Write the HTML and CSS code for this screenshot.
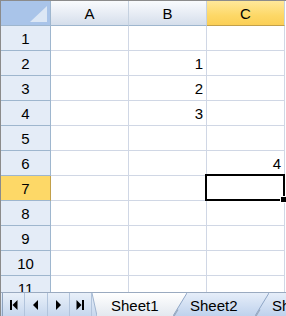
FILE: index.html
```html
<!DOCTYPE html>
<html>
<head>
<meta charset="utf-8">
<link rel="stylesheet" href="styles.css">
</head>
<body>
<div class="book">
  <div class="grid">
    <div class="corner"><span class="corner-tri"></span></div>
    <div class="colhead">A</div>
    <div class="colhead">B</div>
    <div class="colhead sel">C</div>

    <div class="rowhead">1</div><div class="cell"></div><div class="cell"></div><div class="cell"></div>
    <div class="rowhead">2</div><div class="cell"></div><div class="cell">1</div><div class="cell"></div>
    <div class="rowhead">3</div><div class="cell"></div><div class="cell">2</div><div class="cell"></div>
    <div class="rowhead">4</div><div class="cell"></div><div class="cell">3</div><div class="cell"></div>
    <div class="rowhead">5</div><div class="cell"></div><div class="cell"></div><div class="cell"></div>
    <div class="rowhead">6</div><div class="cell"></div><div class="cell"></div><div class="cell">4</div>
    <div class="rowhead sel">7</div><div class="cell"></div><div class="cell"></div><div class="cell active"><span class="handle"></span></div>
    <div class="rowhead">8</div><div class="cell"></div><div class="cell"></div><div class="cell"></div>
    <div class="rowhead">9</div><div class="cell"></div><div class="cell"></div><div class="cell"></div>
    <div class="rowhead">10</div><div class="cell"></div><div class="cell"></div><div class="cell"></div>
    <div class="rowhead">11</div><div class="cell"></div><div class="cell"></div><div class="cell"></div>
  </div>
  <div class="tabbar">
    <svg class="defs" width="0" height="0">
      <defs>
        <linearGradient id="gAct" x1="0" y1="0" x2="0" y2="1">
          <stop offset="0" stop-color="#ffffff"/>
          <stop offset="1" stop-color="#e3e8ef"/>
        </linearGradient>
        <linearGradient id="gTab" x1="0" y1="0" x2="0" y2="1">
          <stop offset="0" stop-color="#e6eef9"/>
          <stop offset="1" stop-color="#bfd2ed"/>
        </linearGradient>
        <linearGradient id="gNav" x1="0" y1="0" x2="0" y2="1">
          <stop offset="0" stop-color="#e9f0f9"/>
          <stop offset="1" stop-color="#c6d7ee"/>
        </linearGradient>
      </defs>
    </svg>
    <div class="nav">
      <div class="navbtn"><svg width="10" height="10" viewBox="0 0 10 10"><rect x="1" y="0" width="2" height="10"/><polygon points="8.5,0 8.5,10 3.5,5"/></svg></div>
      <div class="navbtn"><svg width="10" height="10" viewBox="0 0 10 10"><polygon points="7,0 7,10 2,5"/></svg></div>
      <div class="navbtn"><svg width="10" height="10" viewBox="0 0 10 10"><polygon points="3,0 3,10 8,5"/></svg></div>
      <div class="navbtn"><svg width="10" height="10" viewBox="0 0 10 10"><polygon points="1.5,0 1.5,10 6.5,5"/><rect x="7" y="0" width="2" height="10"/></svg></div>
    </div>
    <svg class="slant small" width="5" height="23" viewBox="0 0 5 23">
      <rect width="5" height="23" fill="url(#gAct)"/>
      <polygon points="0,0 0,23 5,23" fill="url(#gNav)"/>
      <line x1="0" y1="0" x2="5" y2="23" stroke="#9fb4cf" stroke-width="1"/>
    </svg>
    <div class="tab active-tab">Sheet1</div>
    <svg class="slant" width="14" height="23" viewBox="0 0 14 23">
      <rect width="14" height="23" fill="url(#gTab)"/>
      <polygon points="0,0 14,0 0,23" fill="url(#gAct)"/>
      <line x1="0" y1="23" x2="14" y2="0" stroke="#8fa6c6" stroke-width="1"/>
      <line x1="1" y1="23" x2="5" y2="16.5" stroke="#9aa9bd" stroke-width="1.2"/>
    </svg>
    <div class="tab tab2">Sheet2</div>
    <svg class="slant" width="14" height="23" viewBox="0 0 14 23">
      <rect width="14" height="23" fill="url(#gTab)"/>
      <polygon points="0,0 14,0 0,23" fill="url(#gTab)"/>
      <line x1="0" y1="23" x2="14" y2="0" stroke="#8fa6c6" stroke-width="1"/>
      <line x1="1" y1="23" x2="5" y2="16.5" stroke="#9aa9bd" stroke-width="1.2"/>
    </svg>
    <div class="tab tab3">Sheet3</div>
  </div>
</div>
</body>
</html>
```

FILE: styles.css
```css
html, body {
  margin: 0;
  padding: 0;
  background: #ffffff;
}
.book {
  width: 286px;
  height: 316px;
  box-sizing: border-box;
  border-top: 1px solid #8b8b8b;
  border-left: 1px solid #8b8b8b;
  display: flex;
  flex-direction: column;
  overflow: hidden;
  font-family: "Liberation Sans", Arial, sans-serif;
  font-size: 15px;
  color: #000;
}
.grid {
  height: 291px;
  flex: none;
  overflow: hidden;
  display: grid;
  grid-template-columns: 50px 78px 78px 78px;
  grid-template-rows: 25px;
  grid-auto-rows: 25px;
}
.corner {
  position: relative;
  background: #a9c4e9;
  border-right: 1px solid #9eb6ce;
  border-bottom: 1px solid #9eb6ce;
}
.corner-tri {
  position: absolute;
  right: 3px;
  bottom: 3px;
  width: 0;
  height: 0;
  border-left: 17px solid transparent;
  border-bottom: 16px solid #dce7f5;
}
.colhead {
  background: linear-gradient(#f9fbfd, #e4eaf3 60%, #d5deeb);
  border-right: 1px solid #c5d1e0;
  border-bottom: 1px solid #9eb6ce;
  display: flex;
  align-items: center;
  justify-content: center;
  padding-top: 1px;
}
.colhead.sel {
  background: linear-gradient(#ffe89a, #fdd867 60%, #fbcf56);
  border-bottom-color: #c2a04a;
}
.rowhead {
  background: #e4ecf7;
  border-right: 1px solid #9eb6ce;
  border-bottom: 1px solid #9eb6ce;
  display: flex;
  align-items: center;
  justify-content: center;
}
.rowhead.sel {
  background: #fdd867;
  border-right-color: #c2a04a;
}
.cell {
  border-right: 1px solid #d0d7e5;
  border-bottom: 1px solid #d0d7e5;
  display: flex;
  align-items: center;
  justify-content: flex-end;
  padding-right: 3px;
  position: relative;
}
.cell.active::after {
  content: "";
  position: absolute;
  left: -2px;
  top: -2px;
  right: -1px;
  bottom: -1px;
  border: 2px solid #000;
}
.handle {
  position: absolute;
  right: -3px;
  bottom: -3px;
  width: 5px;
  height: 5px;
  background: #000;
  border: 1px solid #fff;
  z-index: 2;
}
.tabbar {
  height: 24px;
  flex: none;
  display: flex;
  box-sizing: border-box;
  border-top: 1px solid #9aaac0;
  background: linear-gradient(#e6eef9, #bfd2ed);
  overflow: hidden;
}
.defs {
  flex: none;
}
.nav {
  flex: none;
  width: 89px;
  margin-left: 1px;
  display: flex;
  background: linear-gradient(#e9f0f9, #c6d7ee);
  border-left: 1px solid #8ea3bf;
}
.navbtn {
  flex: 1;
  display: flex;
  align-items: center;
  justify-content: center;
  border-right: 1px solid #b2c4dc;
}
.navbtn svg {
  fill: #000;
}
.slant {
  flex: none;
  display: block;
}
.tab {
  flex: none;
  display: flex;
  align-items: center;
  font-size: 15px;
  padding-top: 1px;
}
.active-tab {
  width: 62px;
  padding-left: 14px;
  background: linear-gradient(#ffffff, #e3e8ef);
}
.tab2 {
  width: 65px;
  padding-left: 3px;
  background: linear-gradient(#e6eef9, #bfd2ed);
}
.tab3 {
  padding-left: 3px;
  background: linear-gradient(#e6eef9, #bfd2ed);
}
```
